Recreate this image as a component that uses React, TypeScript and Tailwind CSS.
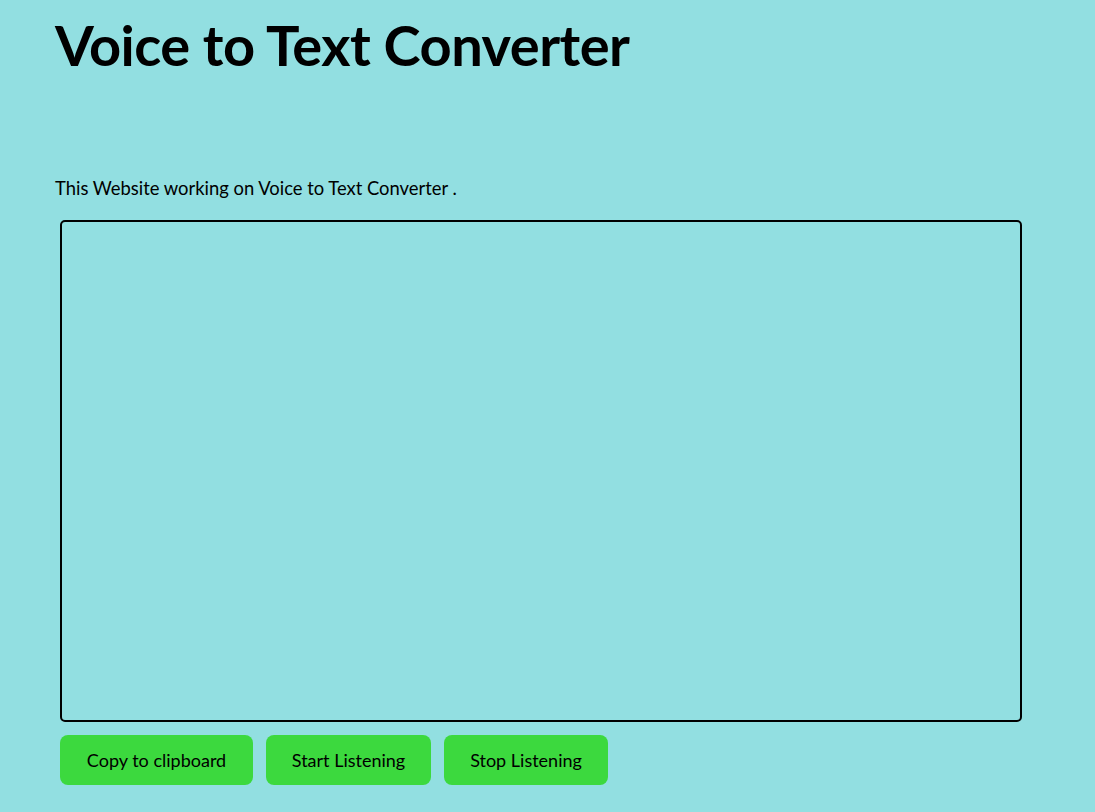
export default function App() {
  return (
    <div className="min-h-screen bg-[#92dfe1] text-black font-['Lato','Open_Sans',sans-serif]">
      <div className="pl-[55px] pt-[9px]">
        <h1 className="text-[56px] font-bold leading-[72px] tracking-[-0.5px]">Voice to Text Converter</h1>
        <p className="mt-[95px] text-[18.4px] leading-[24px]">This Website working on Voice to Text Converter .</p>
        <div className="mt-[20px] ml-[5px] w-[962px] h-[502px] rounded-[5px] border-2 border-black"></div>
        <div className="mt-[13px] ml-[5px] flex gap-[13px]">
          <button className="h-[50px] w-[193px] rounded-[8px] bg-[#3cd93e] text-[18px]">Copy to clipboard</button>
          <button className="h-[50px] w-[165px] rounded-[8px] bg-[#3cd93e] text-[18px]">Start Listening</button>
          <button className="h-[50px] w-[164px] rounded-[8px] bg-[#3cd93e] text-[18px]">Stop Listening</button>
        </div>
      </div>
    </div>
  );
}
